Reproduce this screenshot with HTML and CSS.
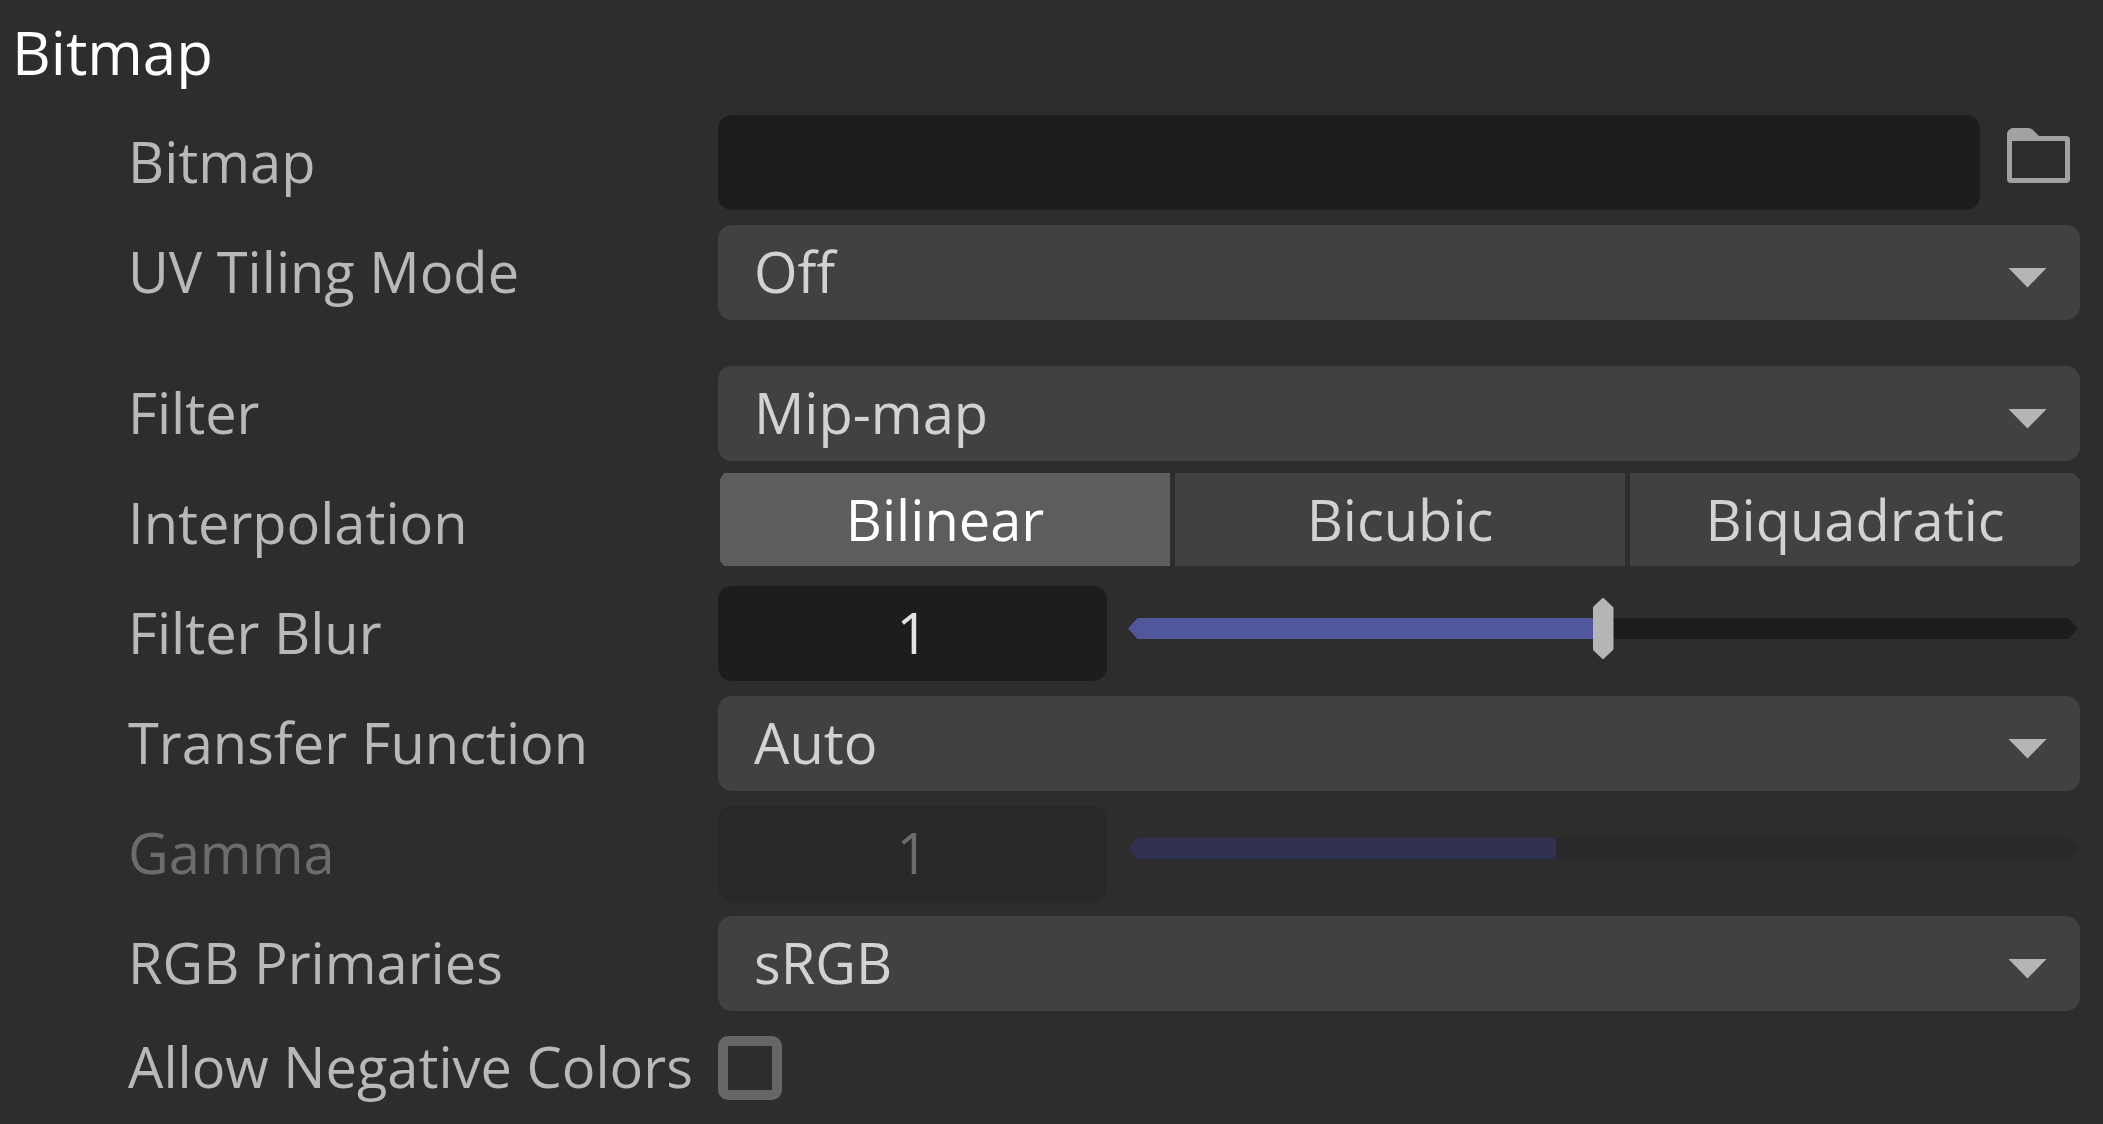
FILE: index.html
```html
<!DOCTYPE html>
<html lang="en">
<head>
<meta charset="utf-8">
<title>Bitmap</title>
<link rel="stylesheet" href="styles.css">
</head>
<body>
<main class="panel">
  <h1 class="title">Bitmap</h1>
  <form class="rows">
    <div class="row">
      <label class="label" for="bitmap">Bitmap</label>
      <div class="file">
        <input class="field" id="bitmap" type="text">
        <button class="browse" type="button" aria-label="Browse">
          <svg width="63" height="55" viewBox="0 0 63 55" aria-hidden="true">
            <path fill="#a2a2a2" fill-rule="evenodd" d="M5 0H21Q24 0 26 2L32 8H59Q63 8 63 12V51Q63 55 59 55H4Q0 55 0 51V6Q0 2 5 0ZM5 13V50H58V13Z"/>
          </svg>
        </button>
      </div>
    </div>
    <div class="row group-end">
      <label class="label" for="tiling">UV Tiling Mode</label>
      <div class="dropdown"><select class="select" id="tiling"><option>Off</option></select><span class="arrow"></span></div>
    </div>
    <div class="row">
      <label class="label" for="filter">Filter</label>
      <div class="dropdown"><select class="select" id="filter"><option>Mip-map</option></select><span class="arrow"></span></div>
    </div>
    <div class="row">
      <span class="label" id="interpolation">Interpolation</span>
      <div class="segments" role="group" aria-labelledby="interpolation">
        <button class="segment selected" type="button" aria-pressed="true">Bilinear</button>
        <button class="segment" type="button" aria-pressed="false">Bicubic</button>
        <button class="segment" type="button" aria-pressed="false">Biquadratic</button>
      </div>
    </div>
    <div class="row">
      <label class="label" for="blur">Filter Blur</label>
      <div class="amount">
        <input class="field number" id="blur" type="text" value="1">
        <input class="slider" type="range" min="0" max="2" step="0.01" value="1" aria-label="Filter Blur" style="--fill: 50%">
      </div>
    </div>
    <div class="row">
      <label class="label" for="transfer">Transfer Function</label>
      <div class="dropdown"><select class="select" id="transfer"><option>Auto</option></select><span class="arrow"></span></div>
    </div>
    <div class="row disabled">
      <label class="label" for="gamma">Gamma</label>
      <div class="amount">
        <input class="field number" id="gamma" type="text" value="1" disabled>
        <input class="slider" type="range" min="0" max="100" value="45" aria-label="Gamma" disabled style="--fill: 45%">
      </div>
    </div>
    <div class="row">
      <label class="label" for="primaries">RGB Primaries</label>
      <div class="dropdown"><select class="select" id="primaries"><option>sRGB</option></select><span class="arrow"></span></div>
    </div>
    <div class="row short">
      <label class="label" for="negative">Allow Negative Colors</label>
      <input class="check" id="negative" type="checkbox">
    </div>
  </form>
</main>
</body>
</html>
```
FILE: styles.css
```css
* {
  box-sizing: border-box;
}

body {
  margin: 0;
  background: #2d2d2d;
  color: #b8b8b8;
  font-family: "Open Sans", "Noto Sans", sans-serif;
  font-size: 56px;
  line-height: 76px;
}

input,
select,
button {
  margin: 0;
  border: 0;
  font: inherit;
  color: #d2d2d2;
}

.panel {
  padding: 12px 23px 12px 12px;
}

.title {
  margin: 0 0 23px;
  color: #fff;
  font-size: 60px;
  font-weight: 400;
  line-height: 80px;
}

.rows {
  display: flex;
  flex-direction: column;
  gap: 15px;
  padding-left: 116px;
}

.row {
  display: grid;
  grid-template-columns: 590px minmax(0, 1fr);
  align-items: center;
  height: 95px;
}

.group-end {
  margin-bottom: 31px;
}

.short {
  height: 84px;
}

.label {
  padding-bottom: 4px;
  white-space: nowrap;
}

.field {
  min-width: 0;
  height: 95px;
  padding: 0 16px 4px;
  border-radius: 14px;
  background: #1d1d1d;
}

.file {
  display: flex;
}

.file .field {
  flex: 1;
}

.browse {
  display: flex;
  width: 100px;
  padding: 13px 0 0 27px;
  background: none;
}

.dropdown {
  display: grid;
}

.select {
  grid-area: 1 / 1;
  height: 95px;
  padding: 0 90px 4px 36px;
  border-radius: 14px;
  background: #404140;
  appearance: none;
}

.arrow {
  grid-area: 1 / 1;
  place-self: center end;
  width: 39px;
  height: 20px;
  margin: 10px 33px 0 0;
  background: #b4b5b4;
  clip-path: polygon(0 0, 100% 0, 50% 100%);
  pointer-events: none;
}

.segments {
  display: grid;
  grid-template-columns: repeat(3, 1fr);
  gap: 5px;
  height: 93px;
  margin: -3px 0 5px 2px;
}

.segment {
  padding: 0 0 2px;
  background: #404140;
}

.segment:last-child {
  clip-path: polygon(0 0, calc(100% - 6px) 0, 100% 7px, 100% calc(100% - 5px), calc(100% - 6px) 100%, 0 100%);
}

.selected {
  background: #5c5d5c;
  color: #fff;
  clip-path: polygon(4px 0, 100% 0, 100% 100%, 4px 100%, 0 calc(100% - 5px), 0 6px);
}

.amount {
  display: grid;
  grid-template-columns: 389px minmax(0, 1fr);
  gap: 21px;
  align-items: center;
}

.number {
  text-align: center;
  color: #e4e4e4;
}

.slider {
  width: 100%;
  height: 62px;
  margin-bottom: 10px;
  padding-right: 2px;
  background: none;
  appearance: none;
  clip-path: polygon(0 50%, 10px 20px, 10px 0, calc(100% - 12px) 0, calc(100% - 12px) 20px, calc(100% - 2px) 50%, calc(100% - 12px) 42px, calc(100% - 12px) 100%, 10px 100%, 10px 42px);
}

.slider::-webkit-slider-runnable-track {
  display: flex;
  align-items: center;
  height: 62px;
  background: linear-gradient(to right, #50579b var(--fill), #1c1c1c var(--fill)) center / 100% 21px no-repeat;
}

.slider::-webkit-slider-thumb {
  width: 21px;
  height: 62px;
  background: #b5b5b5;
  appearance: none;
  clip-path: polygon(50% 0, 100% 10px, 100% 52px, 50% 100%, 0 52px, 0 10px);
}

.disabled .label,
.disabled .field {
  color: #6c6c6c;
}

.disabled .field {
  background: #282828;
}

.disabled .slider::-webkit-slider-runnable-track {
  background-image: linear-gradient(to right, #303150 var(--fill), #292929 var(--fill));
}

.disabled .slider::-webkit-slider-thumb {
  visibility: hidden;
}

.check {
  width: 64px;
  height: 64px;
  border: 10px solid #656666;
  border-radius: 10px;
  background: #2d2d2d;
  appearance: none;
}
```
